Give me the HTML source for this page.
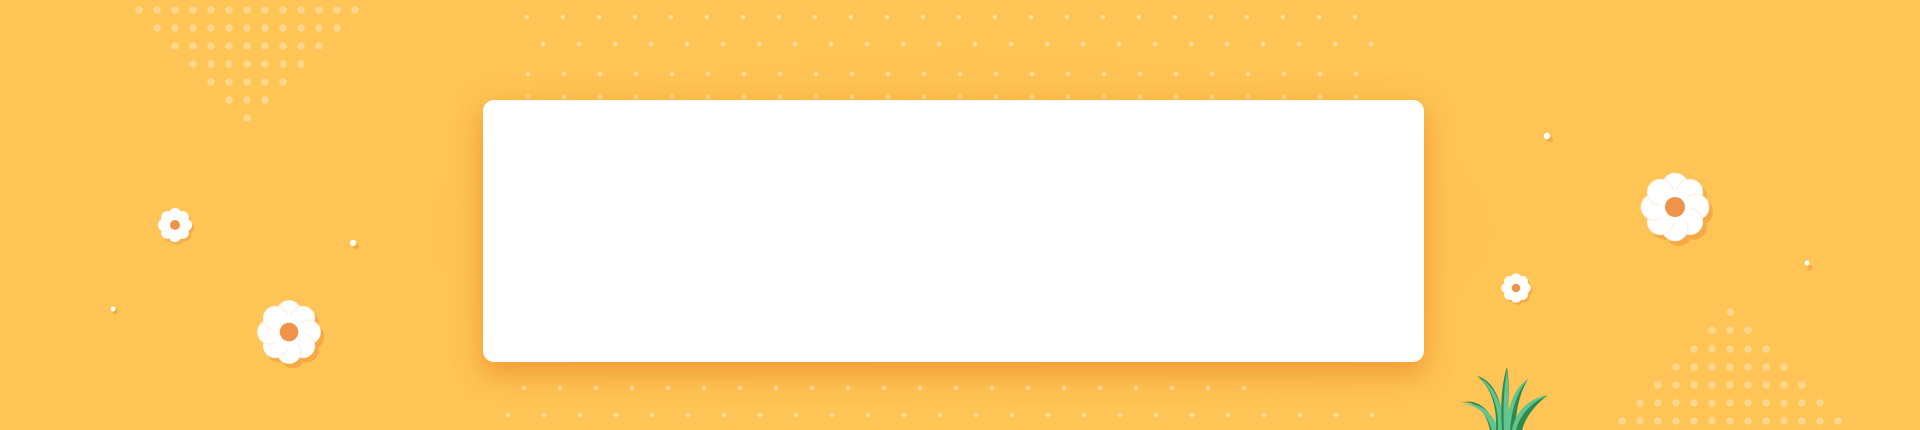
<!DOCTYPE html>
<html><head><meta charset="utf-8"><style>
html,body{margin:0;padding:0;}
body{width:1920px;height:430px;overflow:hidden;position:relative;background:#FEC455;}
.bg{position:absolute;inset:0;background:radial-gradient(ellipse 900px 300px at 960px 230px,#FDC050 0%,rgba(254,196,85,0) 70%);}
.grid{position:absolute;background-image:radial-gradient(circle,rgba(255,255,255,0.38) 2px,transparent 2.8px);background-size:36px 30px;}
.card{position:absolute;left:483px;top:100px;width:941px;height:262px;background:#fff;border-radius:11px;box-shadow:0 14px 24px rgba(236,140,40,0.55),0 4px 30px rgba(236,150,50,0.35);}
svg{position:absolute;left:0;top:0;}
</style></head><body>
<div class="bg"></div>
<div class="grid" style="left:509px;top:2px;width:880px;height:30px;"></div>
<div class="grid" style="left:525px;top:29px;width:860px;height:30px;"></div>
<div class="grid" style="left:510px;top:59px;width:880px;height:30px;"></div>
<div class="grid" style="left:510px;top:82px;width:880px;height:30px;"></div>
<div class="grid" style="left:506px;top:373px;width:740px;height:30px;"></div>
<div class="grid" style="left:490px;top:400px;width:900px;height:30px;"></div>
<div class="card"></div>
<svg width="1920" height="430" viewBox="0 0 1920 430">
<defs>
<g id="fl">
<g fill="#F6A945" transform="translate(4,5)">
<circle cx="0" cy="-21" r="13"/><circle cx="14.8" cy="-14.8" r="13"/><circle cx="21" cy="0" r="13"/><circle cx="14.8" cy="14.8" r="13"/><circle cx="0" cy="21" r="13"/><circle cx="-14.8" cy="14.8" r="13"/><circle cx="-21" cy="0" r="13"/><circle cx="-14.8" cy="-14.8" r="13"/>
</g>
<g fill="#fff" stroke="#FBE7CF" stroke-width="0.8">
<circle cx="0" cy="-21" r="13"/><circle cx="14.8" cy="-14.8" r="13"/><circle cx="21" cy="0" r="13"/><circle cx="14.8" cy="14.8" r="13"/><circle cx="0" cy="21" r="13"/><circle cx="-14.8" cy="14.8" r="13"/><circle cx="-21" cy="0" r="13"/><circle cx="-14.8" cy="-14.8" r="13"/>
</g>
<circle cx="0" cy="0" r="16" fill="#fff"/>
<circle cx="0" cy="0" r="10" fill="#F0934A"/>
</g>
</defs>
<g fill="rgba(255,255,255,0.33)">
<circle cx="139" cy="10" r="3.8"/><circle cx="157" cy="10" r="3.8"/><circle cx="175" cy="10" r="3.8"/><circle cx="193" cy="10" r="3.8"/><circle cx="211" cy="10" r="3.8"/><circle cx="229" cy="10" r="3.8"/><circle cx="247" cy="10" r="3.8"/><circle cx="265" cy="10" r="3.8"/><circle cx="283" cy="10" r="3.8"/><circle cx="301" cy="10" r="3.8"/><circle cx="319" cy="10" r="3.8"/><circle cx="337" cy="10" r="3.8"/><circle cx="355" cy="10" r="3.8"/>
<circle cx="157" cy="28" r="3.8"/><circle cx="175" cy="28" r="3.8"/><circle cx="193" cy="28" r="3.8"/><circle cx="211" cy="28" r="3.8"/><circle cx="229" cy="28" r="3.8"/><circle cx="247" cy="28" r="3.8"/><circle cx="265" cy="28" r="3.8"/><circle cx="283" cy="28" r="3.8"/><circle cx="301" cy="28" r="3.8"/><circle cx="319" cy="28" r="3.8"/><circle cx="337" cy="28" r="3.8"/>
<circle cx="175" cy="46" r="3.8"/><circle cx="193" cy="46" r="3.8"/><circle cx="211" cy="46" r="3.8"/><circle cx="229" cy="46" r="3.8"/><circle cx="247" cy="46" r="3.8"/><circle cx="265" cy="46" r="3.8"/><circle cx="283" cy="46" r="3.8"/><circle cx="301" cy="46" r="3.8"/><circle cx="319" cy="46" r="3.8"/>
<circle cx="193" cy="64" r="3.8"/><circle cx="211" cy="64" r="3.8"/><circle cx="229" cy="64" r="3.8"/><circle cx="247" cy="64" r="3.8"/><circle cx="265" cy="64" r="3.8"/><circle cx="283" cy="64" r="3.8"/><circle cx="301" cy="64" r="3.8"/>
<circle cx="211" cy="82" r="3.8"/><circle cx="229" cy="82" r="3.8"/><circle cx="247" cy="82" r="3.8"/><circle cx="265" cy="82" r="3.8"/><circle cx="283" cy="82" r="3.8"/>
<circle cx="229" cy="100" r="3.8"/><circle cx="247" cy="100" r="3.8"/><circle cx="265" cy="100" r="3.8"/>
<circle cx="247" cy="118" r="3.8"/>
<circle cx="1730" cy="312" r="3.8"/>
<circle cx="1712" cy="330" r="3.8"/><circle cx="1730" cy="330" r="3.8"/><circle cx="1748" cy="330" r="3.8"/>
<circle cx="1694" cy="349" r="3.8"/><circle cx="1712" cy="349" r="3.8"/><circle cx="1730" cy="349" r="3.8"/><circle cx="1748" cy="349" r="3.8"/><circle cx="1766" cy="349" r="3.8"/>
<circle cx="1676" cy="367" r="3.8"/><circle cx="1694" cy="367" r="3.8"/><circle cx="1712" cy="367" r="3.8"/><circle cx="1730" cy="367" r="3.8"/><circle cx="1748" cy="367" r="3.8"/><circle cx="1766" cy="367" r="3.8"/><circle cx="1784" cy="367" r="3.8"/>
<circle cx="1658" cy="385" r="3.8"/><circle cx="1676" cy="385" r="3.8"/><circle cx="1694" cy="385" r="3.8"/><circle cx="1712" cy="385" r="3.8"/><circle cx="1730" cy="385" r="3.8"/><circle cx="1748" cy="385" r="3.8"/><circle cx="1766" cy="385" r="3.8"/><circle cx="1784" cy="385" r="3.8"/><circle cx="1802" cy="385" r="3.8"/>
<circle cx="1640" cy="403" r="3.8"/><circle cx="1658" cy="403" r="3.8"/><circle cx="1676" cy="403" r="3.8"/><circle cx="1694" cy="403" r="3.8"/><circle cx="1712" cy="403" r="3.8"/><circle cx="1730" cy="403" r="3.8"/><circle cx="1748" cy="403" r="3.8"/><circle cx="1766" cy="403" r="3.8"/><circle cx="1784" cy="403" r="3.8"/><circle cx="1802" cy="403" r="3.8"/><circle cx="1820" cy="403" r="3.8"/>
<circle cx="1622" cy="421" r="3.8"/><circle cx="1640" cy="421" r="3.8"/><circle cx="1658" cy="421" r="3.8"/><circle cx="1676" cy="421" r="3.8"/><circle cx="1694" cy="421" r="3.8"/><circle cx="1712" cy="421" r="3.8"/><circle cx="1730" cy="421" r="3.8"/><circle cx="1748" cy="421" r="3.8"/><circle cx="1766" cy="421" r="3.8"/><circle cx="1784" cy="421" r="3.8"/><circle cx="1802" cy="421" r="3.8"/><circle cx="1820" cy="421" r="3.8"/><circle cx="1838" cy="421" r="3.8"/>
</g>
<use href="#fl" transform="translate(175,225) scale(0.5)"/>
<use href="#fl" transform="translate(289,332) scale(0.93)"/>
<use href="#fl" transform="translate(1675,207) scale(1)"/>
<use href="#fl" transform="translate(1516,288) scale(0.43)"/>
<g>
<circle cx="356" cy="246" r="3" fill="#F6A945"/><circle cx="353" cy="243" r="3.2" fill="#fff"/>
<circle cx="115" cy="312" r="2.5" fill="#F6A945"/><circle cx="113" cy="309" r="2.5" fill="#fff"/>
<circle cx="1550" cy="139" r="3" fill="#F6A945"/><circle cx="1547" cy="136" r="3.2" fill="#fff"/>
<circle cx="1810" cy="268" r="2.5" fill="#F6A945"/><circle cx="1807" cy="263" r="2.5" fill="#fff"/>
</g>
<g stroke="none">
<path d="M1490 430 C1486 412 1476 400 1461 403 C1474 398 1490 406 1497 430 Z" fill="#2E8B4F"/>
<path d="M1492 430 C1487 414 1478 405 1463 404 C1478 402 1492 410 1499 430 Z" fill="#62C58F"/>
<path d="M1496 430 C1497 408 1492 388 1477 376 C1494 380 1504 404 1503 430 Z" fill="#2E8B4F"/>
<path d="M1498 430 C1499 410 1494 392 1480 378 C1495 386 1504 408 1504 430 Z" fill="#62C58F"/>
<path d="M1502 430 C1500 405 1502 382 1507 367 C1510 385 1508 408 1508 430 Z" fill="#2E8B4F"/>
<path d="M1504 430 C1503 408 1504 386 1507 370 C1509 388 1508 410 1508 430 Z" fill="#62C58F"/>
<path d="M1506 430 C1508 406 1514 388 1528 379 C1518 392 1513 410 1513 430 Z" fill="#62C58F"/>
<path d="M1510 430 C1512 408 1517 392 1528 379 C1519 394 1516 412 1515 430 Z" fill="#2E8B4F"/>
<path d="M1512 430 C1516 410 1530 398 1548 395 C1534 402 1522 414 1520 430 Z" fill="#62C58F"/>
<path d="M1516 430 C1520 414 1532 402 1548 395 C1536 404 1526 416 1522 430 Z" fill="#2E8B4F"/>
</g>
</svg>
</body></html>
